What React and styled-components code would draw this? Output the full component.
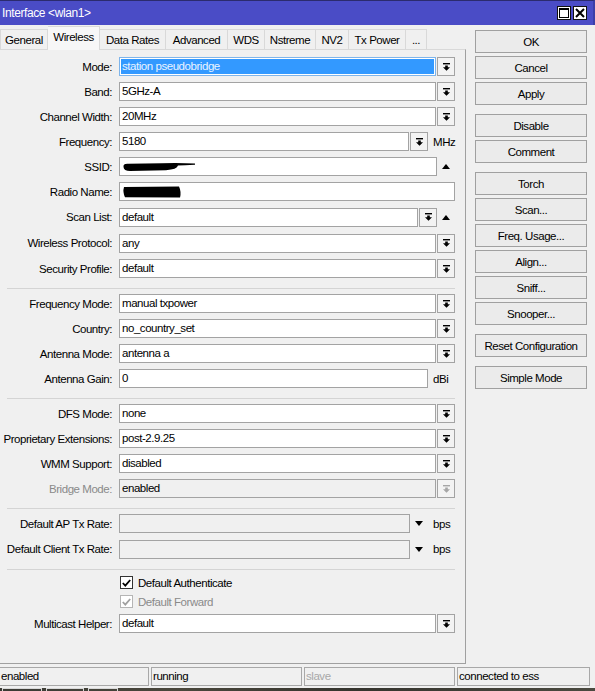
import React from "react";
import styled, { createGlobalStyle } from "styled-components";

const GlobalStyle = createGlobalStyle`
  html, body { margin: 0; padding: 0; background: #f0f0f0; }
  body { font-family: "Liberation Sans", Arial, sans-serif; }
  * { box-sizing: border-box; }
`;

const FONT = `
  font-family: "Liberation Sans", Arial, sans-serif;
  font-size: 11.5px;
  letter-spacing: -0.45px;
`;

const Window = styled.div`
  width: 595px;
  height: 691px;
  background: #f0f0f0;
  display: flex;
  flex-direction: column;
  overflow: hidden;
  ${FONT}
  color: #000;
`;

const TitleBar = styled.div`
  height: 25px;
  flex: none;
  background: #4a4cc6;
  border-top: 1px solid #2b2b6e;
  border-right: 2px solid #3c3ea8;
  display: flex;
  align-items: center;
  padding: 0 6px 0 2px;
  color: #fff;
  font-size: 12px;
  letter-spacing: -0.4px;
`;

const Title = styled.span`
  flex: 1;
`;

const Controls = styled.div`
  display: flex;
  gap: 2px;
`;

const CtlBtn = styled.div`
  width: 14px;
  height: 14px;
  background: #fff;
  border: 1px solid #111;
  display: flex;
  align-items: center;
  justify-content: center;
`;

const Body = styled.div`
  height: 640px;
  flex: none;
  display: flex;
`;

const LeftCol = styled.div`
  width: 466px;
  flex: none;
  display: flex;
  flex-direction: column;
`;

const Tabs = styled.div`
  height: 24px;
  display: flex;
  align-items: flex-end;
  position: relative;
  z-index: 1;
`;

const Tab = styled.div`
  width: ${(p) => p.$w}px;
  height: ${(p) => (p.$active ? 24 : 20)}px;
  margin-bottom: ${(p) => (p.$active ? -1 : 0)}px;
  border-top: 1px solid #d9d9d9;
  border-right: 1px solid #d9d9d9;
  border-left: ${(p) => (p.$first ? "1px solid #d9d9d9" : "none")};
  background: ${(p) => (p.$active ? "#f7f7f7" : "#f0f0f0")};
  display: flex;
  align-items: center;
  justify-content: center;
  padding-bottom: ${(p) => (p.$active ? 4 : 0)}px;
  white-space: nowrap;
`;

const Panel = styled.div`
  height: 615px;
  border-top: 1px solid #d9d9d9;
  border-right: 1px solid #a0a0a0;
  border-bottom: 1px solid #a0a0a0;
  padding: 4px 10px 0 0;
  display: flex;
  flex-direction: column;
`;

const Row = styled.div`
  height: ${(p) => (p.$tall ? 26 : 25)}px;
  display: flex;
  align-items: center;
`;

const Label = styled.div`
  width: 112px;
  margin-right: 7px;
  text-align: right;
  white-space: nowrap;
  color: ${(p) => (p.$disabled ? "#8a8a8a" : "#000")};
`;

const Field = styled.div`
  flex: 1;
  height: 19px;
  display: flex;
  align-items: center;
`;

const Input = styled.div`
  flex: 1;
  height: 19px;
  border: 1px solid ${(p) => (p.$selected ? "#7eb4ea" : "#a3a3a3")};
  background: ${(p) => (p.$selected ? "#3399ff" : p.$disabled ? "#f0f0f0" : "#fff")};
  box-shadow: ${(p) => (p.$selected ? "inset 0 0 0 1px #fff" : "none")};
  color: ${(p) => (p.$selected ? "#eaf4ff" : "#000")};
  padding: 0 2px;
  line-height: 17px;
  white-space: nowrap;
  overflow: hidden;
  display: flex;
  align-items: center;
`;

const DropBtn = styled.div`
  width: 18px;
  height: 19px;
  margin-left: 1px;
  flex: none;
  border: 1px solid #a3a3a3;
  background: #f3f3f3;
  display: flex;
  align-items: center;
  justify-content: center;
`;

const ArrowSlot = styled.div`
  width: 18px;
  flex: none;
  display: flex;
  align-items: center;
  justify-content: center;
`;

const Unit = styled.div`
  width: 27px;
  flex: none;
  padding-left: 5px;
  white-space: nowrap;
`;

const Separator = styled.div`
  height: 1px;
  margin: 7px 0 ${(p) => p.$after ?? 2}px 7px;
  background: #d4d4d4;
  flex: none;
`;

const CheckRow = styled.div`
  height: 19px;
  display: flex;
  align-items: center;
  padding-left: 120px;
  color: ${(p) => (p.$disabled ? "#8a8a8a" : "#000")};
`;

const Box = styled.div`
  width: 13px;
  height: 13px;
  border: 1px solid ${(p) => (p.$disabled ? "#b5b5b5" : "#333")};
  background: #fff;
  margin-right: 5px;
  display: flex;
  align-items: center;
  justify-content: center;
`;

const RightCol = styled.div`
  width: 112px;
  margin-left: 9px;
  padding-top: 5px;
  display: flex;
  flex-direction: column;
  gap: 9px;
`;

const BtnGroup = styled.div`
  display: flex;
  flex-direction: column;
  gap: 3px;
`;

const Button = styled.div`
  height: 23px;
  border: 1px solid #a0a0a0;
  background: #ebebeb;
  display: flex;
  align-items: center;
  justify-content: center;
  white-space: nowrap;
`;

const StatusBar = styled.div`
  height: 19px;
  margin-top: 2px;
  flex: none;
  display: flex;
  gap: 2px;
`;

const StatusSeg = styled.div`
  width: ${(p) => p.$w}px;
  height: 19px;
  border: 1px solid #a8a8a8;
  border-left: ${(p) => (p.$first ? "none" : "1px solid #a8a8a8")};
  padding-left: 1px;
  line-height: 17px;
  color: ${(p) => (p.$dim ? "#a8a8a8" : "#000")};
  white-space: nowrap;
`;

const Strip = styled.div`
  margin-top: 2px;
  height: 3px;
  flex: none;
  background: linear-gradient(90deg, #3a3a34 0%, #4a473c 30%, #35342e 60%, #4b4a40 100%);
  display: flex;
  gap: 4px;
  padding-left: 2px;
`;

const StripItem = styled.div`
  width: ${(p) => p.$w}px;
  height: 3px;
  border-left: 1px solid #d8d8d8;
  border-right: 1px solid #d8d8d8;
  border-top: 1px solid #d8d8d8;
`;

const DropIcon = ({ disabled }) => (
  <svg width="7" height="8" viewBox="0 0 7 8">
    <g fill={disabled ? "#a6a6a6" : "#000"}>
      <rect x="0" y="0" width="7" height="1.4" />
      <path d="M2.2 2.4 H4.8 V4.3 H7 L3.5 7.8 L0 4.3 H2.2 Z" />
    </g>
  </svg>
);

const UpIcon = () => (
  <svg width="8" height="5" viewBox="0 0 8 5">
    <polygon points="0,5 8,5 4,0" fill="#000" />
  </svg>
);

const DownIcon = () => (
  <svg width="8" height="5" viewBox="0 0 8 5">
    <polygon points="0,0 8,0 4,5" fill="#000" />
  </svg>
);

const SsidBlot = () => (
  <svg width="74" height="10" viewBox="0 0 74 10">
    <path
      d="M1.5 5 Q1 1.5 6 1.8 L40 1.2 Q58 0.6 73 1.6 L73 2.8 Q62 3.2 56 3.6 Q55 7.6 44 8.2 L8 9 Q1.8 9 1.5 5 Z"
      fill="#000"
    />
  </svg>
);

const NameBlot = () => (
  <svg width="60" height="12" viewBox="0 0 60 12">
    <path d="M2 1 L57 0.5 Q59.5 6 58 11.5 L3 11.2 Q0.5 6 2 1 Z" fill="#000" />
  </svg>
);

const Check = ({ disabled }) => (
  <svg width="9" height="8" viewBox="0 0 9 8">
    <path
      d="M0.8 4 L3.3 6.6 L8.2 1"
      fill="none"
      stroke={disabled ? "#a0a0a0" : "#000"}
      strokeWidth="1.8"
    />
  </svg>
);

const tabs = [
  ["General", 48],
  ["Wireless", 52],
  ["Data Rates", 66],
  ["Advanced", 62],
  ["WDS", 37],
  ["Nstreme", 51],
  ["NV2", 33],
  ["Tx Power", 57],
  ["...", 21],
];

const FormRow = ({ label, value, selected, drop, up, down, unit, disabled, tall, inputDisabled }) => (
  <Row $tall={tall}>
    <Label $disabled={disabled}>{label}:</Label>
    <Field>
      <Input $selected={selected} $disabled={inputDisabled}>
        {value}
      </Input>
      {drop && (
        <DropBtn>
          <DropIcon disabled={disabled} />
        </DropBtn>
      )}
      {up && (
        <ArrowSlot>
          <UpIcon />
        </ArrowSlot>
      )}
      {down && (
        <ArrowSlot>
          <DownIcon />
        </ArrowSlot>
      )}
      {unit && <Unit>{unit}</Unit>}
    </Field>
  </Row>
);

export default function App() {
  return (
    <>
      <GlobalStyle />
      <Window>
        <TitleBar>
          <Title>Interface &lt;wlan1&gt;</Title>
          <Controls>
            <CtlBtn>
              <svg width="10" height="10" viewBox="0 0 10 10">
                <rect x="0.5" y="0.5" width="9" height="9" fill="none" stroke="#000" strokeWidth="1" />
                <rect x="0.5" y="0.5" width="9" height="1.5" fill="#000" />
              </svg>
            </CtlBtn>
            <CtlBtn>
              <svg width="10" height="10" viewBox="0 0 10 10">
                <path d="M1 1 L9 9 M9 1 L1 9" stroke="#000" strokeWidth="2" />
              </svg>
            </CtlBtn>
          </Controls>
        </TitleBar>
        <Body>
          <LeftCol>
            <Tabs>
              {tabs.map(([t, w], i) => (
                <Tab key={t} $w={w} $active={t === "Wireless"} $first={i === 0}>
                  {t}
                </Tab>
              ))}
            </Tabs>
            <Panel>
              <FormRow label="Mode" value="station pseudobridge" selected drop />
              <FormRow label="Band" value="5GHz-A" drop />
              <FormRow label="Channel Width" value="20MHz" drop />
              <FormRow label="Frequency" value="5180" drop unit="MHz" />
              <FormRow label="SSID" value={<SsidBlot />} up />
              <FormRow label="Radio Name" value={<NameBlot />} />
              <FormRow label="Scan List" value="default" drop up tall />
              <FormRow label="Wireless Protocol" value="any" drop tall />
              <FormRow label="Security Profile" value="default" drop />
              <Separator />
              <FormRow label="Frequency Mode" value="manual txpower" drop />
              <FormRow label="Country" value="no_country_set" drop />
              <FormRow label="Antenna Mode" value="antenna a" drop />
              <FormRow label="Antenna Gain" value="0" unit="dBi" />
              <Separator />
              <FormRow label="DFS Mode" value="none" drop />
              <FormRow label="Proprietary Extensions" value="post-2.9.25" drop />
              <FormRow label="WMM Support" value="disabled" drop />
              <FormRow label="Bridge Mode" value="enabled" drop disabled inputDisabled />
              <Separator />
              <FormRow label="Default AP Tx Rate" value="" inputDisabled down unit="bps" />
              <FormRow label="Default Client Tx Rate" value="" inputDisabled down unit="bps" tall />
              <Separator $after={3} />
              <CheckRow>
                <Box>
                  <Check />
                </Box>
                Default Authenticate
              </CheckRow>
              <CheckRow $disabled>
                <Box $disabled>
                  <Check disabled />
                </Box>
                Default Forward
              </CheckRow>
              <FormRow label="Multicast Helper" value="default" drop />
            </Panel>
          </LeftCol>
          <RightCol>
            <BtnGroup>
              <Button>OK</Button>
              <Button>Cancel</Button>
              <Button>Apply</Button>
            </BtnGroup>
            <BtnGroup>
              <Button>Disable</Button>
              <Button>Comment</Button>
            </BtnGroup>
            <BtnGroup>
              <Button>Torch</Button>
              <Button>Scan...</Button>
              <Button>Freq. Usage...</Button>
              <Button>Align...</Button>
              <Button>Sniff...</Button>
              <Button>Snooper...</Button>
            </BtnGroup>
            <BtnGroup>
              <Button>Reset Configuration</Button>
            </BtnGroup>
            <BtnGroup>
              <Button>Simple Mode</Button>
            </BtnGroup>
          </RightCol>
        </Body>
        <StatusBar>
          <StatusSeg $w={149} $first>enabled</StatusSeg>
          <StatusSeg $w={151}>running</StatusSeg>
          <StatusSeg $w={151} $dim>slave</StatusSeg>
          <StatusSeg $w={133}>connected to ess</StatusSeg>
        </StatusBar>
        <Strip>
          <StripItem $w={40} />
          <StripItem $w={38} />
          <StripItem $w={30} />
        </Strip>
      </Window>
    </>
  );
}
